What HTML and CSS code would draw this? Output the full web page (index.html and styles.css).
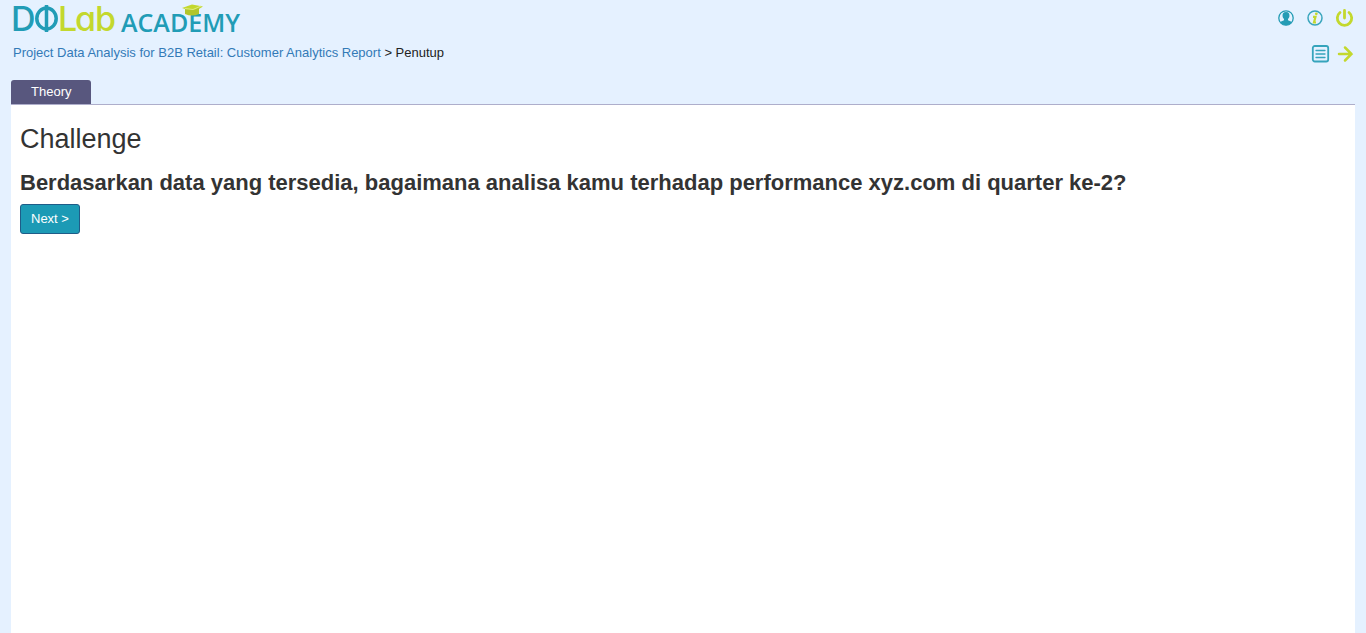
FILE: index.html
```html
<!DOCTYPE html>
<html lang="id">
<head>
<meta charset="utf-8">
<meta name="viewport" content="width=device-width, initial-scale=1">
<title>DQLab Academy</title>
<link rel="stylesheet" href="styles.css">
</head>
<body>
<header class="topbar">
  <a class="logo" href="#" aria-label="DQLab Academy">
    <svg width="250" height="42" viewBox="0 0 250 42">
      <text class="logo-inter teal" x="-2" y="31">D</text>
      <g fill="none" stroke="#219cb6" stroke-width="3.500">
        <ellipse cx="33.500" cy="18.500" rx="9.700" ry="10.500"/>
        <path d="M33.500 5v27"/>
      </g>
      <text class="logo-inter lime" x="45 62 82" y="31">Lab</text>
      <text class="logo-academy teal" x="108" y="32">ACADEMY</text>
      <path d="M169 8l10-3.500 11 2-9 5.500z" fill="#c3d82e"/>
      <path d="M172 9v5q7 3 14 0V8l-5 2z" fill="#b2c52b"/>
      <path d="M172 8.500l8 1 8-3.500" fill="none" stroke="#dfeb80"/>
    </svg>
  </a>
  <nav class="icons" aria-label="Akun">
    <a href="#" aria-label="Profil">
      <svg width="18" height="18" viewBox="0 0 18 18">
        <circle cx="9" cy="9" r="7.200" fill="#e5f2ff" stroke="#249cb5" stroke-width="1.300"/>
        <path d="M9 3c-2.800 0-3.800 1.900-3.400 4.500.2 1 .9 2 1.400 2.500v1.200L3 13q2.500 3.300 6 3.300t6-3.300l-4-1.800V10c.5-.5 1.200-1.500 1.400-2.500C12.800 4.900 11.800 3 9 3z" fill="#249cb5"/>
      </svg>
    </a>
    <a href="#" aria-label="Informasi">
      <svg width="18" height="18" viewBox="0 0 18 18">
        <circle cx="9" cy="9" r="7" fill="none" stroke="#3aa6bd" stroke-width="1.500"/>
        <circle cx="10.300" cy="4.800" r="1.400" fill="#c3d82e"/>
        <path d="M7 7.800h2.500l-1.500 5.700h2" fill="none" stroke="#c3d82e" stroke-width="2.200"/>
      </svg>
    </a>
    <a href="#" aria-label="Keluar">
      <svg width="18" height="18" viewBox="0 0 18 18" fill="none" stroke="#c3d82e" stroke-width="2.800" stroke-linecap="round">
        <path d="M9.500 1.500v7.500M5 3.500a7.200 7.200 0 1 0 9 0"/>
      </svg>
    </a>
  </nav>
</header>
<div class="subbar">
  <nav class="crumbs" aria-label="Breadcrumb"><a href="#">Project Data Analysis for B2B Retail: Customer Analytics Report</a> &gt; Penutup</nav>
  <nav class="icons pager" aria-label="Halaman">
    <a href="#" aria-label="Daftar isi">
      <svg width="18" height="18" viewBox="0 0 18 18" fill="none" stroke="#35a4bc">
        <rect x="1.800" y="1" width="15.400" height="15.500" rx="2" stroke-width="1.800"/>
        <path d="M5 5.500h9M5 9h9M5 12.500h9" stroke-width="1.300" stroke-linecap="round"/>
      </svg>
    </a>
    <a href="#" aria-label="Berikutnya">
      <svg width="18" height="18" viewBox="0 0 18 18" fill="none" stroke="#c3d82e" stroke-width="2.500" stroke-linecap="round">
        <path d="M4 9h12.500M10 2.500l6.500 6.500-6.500 6.500"/>
      </svg>
    </a>
  </nav>
</div>
<div class="tabs"><a class="tab" href="#theory">Theory</a></div>
<main class="panel" id="theory">
  <h1 class="title">Challenge</h1>
  <h2 class="question">Berdasarkan data yang tersedia, bagaimana analisa kamu terhadap performance xyz.com di quarter ke-2?</h2>
  <button class="next" type="button">Next &gt;</button>
</main>
</body>
</html>
```
FILE: styles.css
```css
* {
  box-sizing: border-box;
}

body {
  display: flex;
  flex-direction: column;
  min-height: 100vh;
  margin: 0;
  padding: 0 11px;
  background: #e5f1ff;
  color: #333;
  font: 13px/20px "Liberation Sans", Arial, sans-serif;
}

a {
  color: #337ab7;
  text-decoration: none;
}

svg {
  display: block;
  overflow: visible;
}

.topbar,
.subbar {
  display: flex;
  justify-content: space-between;
  padding: 0 2px;
}

.subbar {
  height: 38px;
}

.icons {
  display: flex;
  gap: 11px;
  padding-top: 9px;
}

.pager {
  gap: 6px;
  padding-top: 3px;
}

.crumbs {
  padding-top: 1px;
  color: #222;
}

.logo-academy {
  font-family: "Open Sans", sans-serif;
  font-size: 25px;
  font-weight: 600;
}

.logo-inter {
  font-family: Inter, sans-serif;
  font-size: 34px;
  font-weight: 500;
  font-feature-settings: "cv11";
}

.teal {
  fill: #219cb6;
}

.lime {
  fill: #c3d82e;
}

.tabs {
  display: flex;
  border-bottom: 1px solid #aeaecb;
}

.tab {
  padding: 2px 20px;
  border-radius: 3px 3px 0 0;
  background: #58577e;
  color: #fff;
}

.panel {
  flex: 1;
  padding: 19px 9px;
  background: #fff;
}

.title {
  margin: 0 0 16px;
  font-size: 27px;
  font-weight: 400;
  line-height: 30px;
}

.question {
  margin: 0 0 8px;
  font-size: 22px;
  line-height: 26px;
}

.next {
  height: 30px;
  padding: 0 10px;
  border: 1px solid #1f5c88;
  border-radius: 3px;
  background: #1c9ab5;
  color: #fff;
  font: 13px/20px "Liberation Sans", Arial, sans-serif;
}
```
